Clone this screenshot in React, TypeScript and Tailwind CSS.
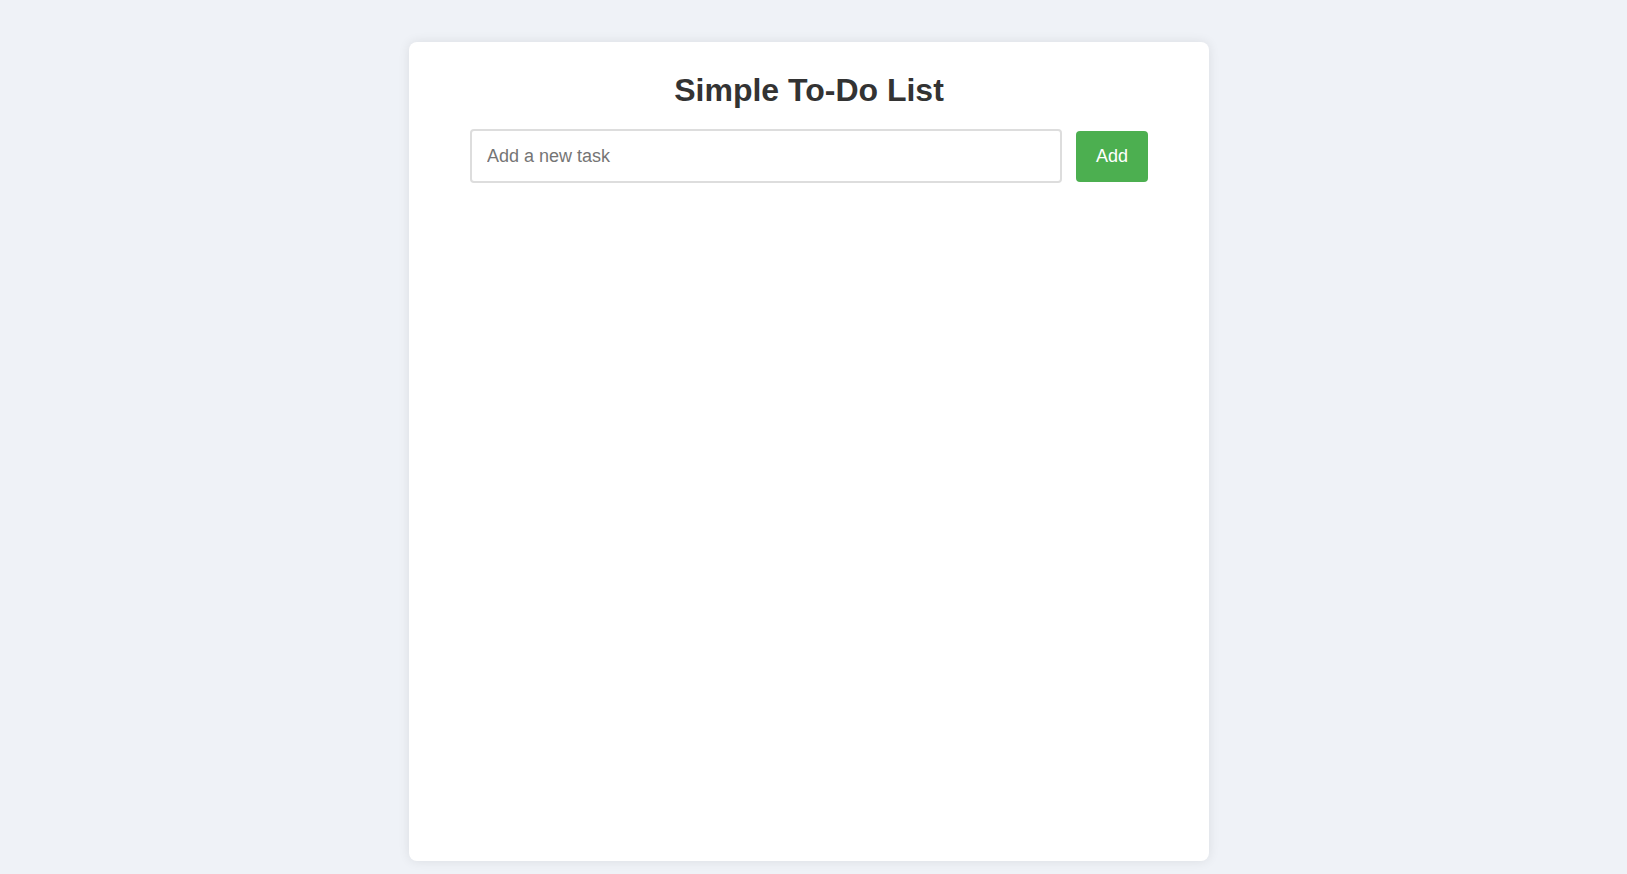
import { useState } from "react";

const App = () => {
  const [task, setTask] = useState("");
  const [tasks, setTasks] = useState<string[]>([]);

  const handleAdd = () => {
    if (!task.trim()) return;
    setTasks([...tasks, task.trim()]);
    setTask("");
  };

  return (
    <div className="min-h-screen bg-[#eff2f7] pt-[42px] pr-[9px] font-['Liberation_Sans',Arial,sans-serif]">
      <div className="mx-auto flex h-[819px] w-[800px] flex-col items-center rounded-lg bg-white pt-[30px] shadow-[0_0_12px_rgba(0,0,0,0.09)]">
        <h1 className="text-[32px] font-bold leading-[37px] text-[#333]">Simple To-Do List</h1>
        <div className="mt-[20px] flex w-[678px] items-center gap-[14px]">
          <input
            type="text"
            placeholder="Add a new task"
            value={task}
            onChange={(e) => setTask(e.target.value)}
            onKeyDown={(e) => e.key === "Enter" && handleAdd()}
            className="h-[54px] w-[592px] rounded-[4px] border-2 border-[#dddddd] px-[15px] text-[18px] text-[#333] outline-none placeholder:text-[#757575]"
          />
          <button
            onClick={handleAdd}
            className="h-[51px] w-[72px] cursor-pointer rounded-[4px] bg-[#4caf50] text-[18px] text-white"
          >
            Add
          </button>
        </div>
        <ul className="mt-5 w-[678px]">
          {tasks.map((t, i) => (
            <li key={i} className="border-b border-[#eee] py-2 text-[18px] text-[#333]">
              {t}
            </li>
          ))}
        </ul>
      </div>
    </div>
  );
};

export default App;
